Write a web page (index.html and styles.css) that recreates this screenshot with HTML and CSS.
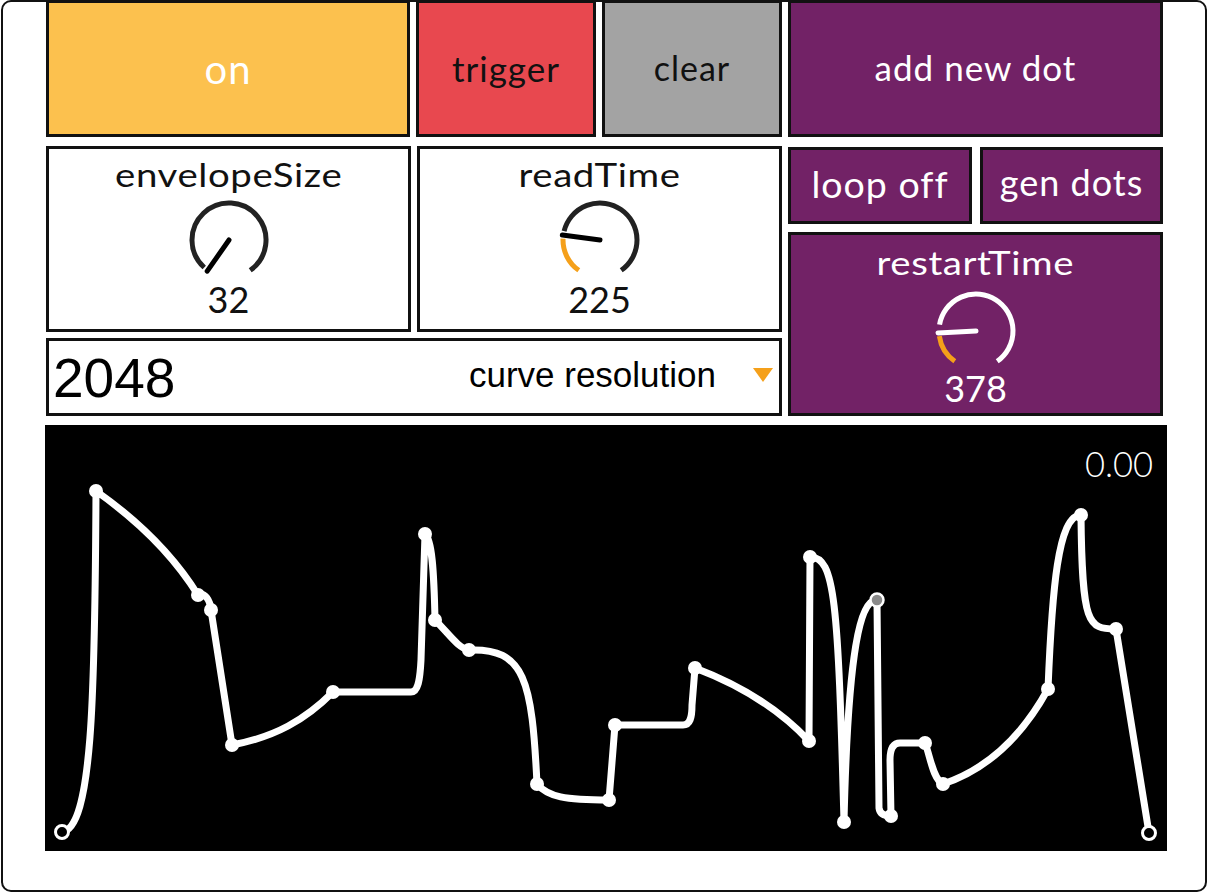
FILE: index.html
```html
<!DOCTYPE html>
<html>
<head>
<meta charset="utf-8">
<link rel="stylesheet" href="styles.css">
</head>
<body>
<div class="frame">
  <div class="top">
    <div class="leftcol">
      <div class="row r1">
        <div class="btn on">on</div>
        <div class="btn trigger">trigger</div>
        <div class="btn clear">clear</div>
      </div>
      <div class="row r2">
        <div class="dial">
          <div class="dial-label">envelopeSize</div>
          <svg class="knob" viewBox="0 0 84 84">
            <path class="arc-val" d="M20.78,72.31 A37,37 0 0 1 19.73,71.55"/>
            <path class="arc-dark" d="M17.24,69.50 A37,37 0 1 1 63.22,72.31"/>
            <line class="ptr-dark" x1="42" y1="42" x2="20.2" y2="73.13"/>
          </svg>
          <div class="dial-value">32</div>
        </div>
        <div class="dial">
          <div class="dial-label">readTime</div>
          <svg class="knob" viewBox="0 0 84 84">
            <path class="arc-val" d="M20.78,72.31 A37,37 0 0 1 5.02,40.71"/>
            <path class="arc-dark" d="M6.10,33.05 A37,37 0 1 1 63.22,72.31"/>
            <line class="ptr-dark" x1="42" y1="42" x2="4.33" y2="37.04"/>
          </svg>
          <div class="dial-value">225</div>
        </div>
      </div>
      <div class="select">
        <span class="sel-value">2048</span>
        <span class="sel-label">curve resolution</span>
        <span class="sel-caret"></span>
      </div>
    </div>
    <div class="rightcol">
      <div class="btn purple add">add new dot</div>
      <div class="row r2b">
        <div class="btn purple loop">loop off</div>
        <div class="btn purple gen">gen dots</div>
      </div>
      <div class="dial dial-purple">
        <div class="dial-label">restartTime</div>
        <svg class="knob" viewBox="0 0 84 84">
          <path class="arc-val" d="M20.78,72.31 A37,37 0 0 1 5.36,47.15"/>
          <path class="arc-light" d="M5.56,35.58 A37,37 0 1 1 63.22,72.31"/>
          <line class="ptr-light" x1="42" y1="42" x2="4.05" y2="43.99"/>
        </svg>
        <div class="dial-value">378</div>
      </div>
    </div>
  </div>
  <div class="canvas">
    <svg class="curve" viewBox="45 425 1122 426" width="1122" height="426">
      <path class="line" d="M62,832 C92,828 95,700 96,491 C130,515 170,550 198,595 C205,592 210,600 211,610 L232,745 C275,737 305,720 333,692 L411,692 C418,692 420,680 421,660 L425,534 C432,540 434,570 435,620 C450,635 458,648 469,650 C525,648 532,680 537,784 C548,797 565,800 609,800 L615,725 L683,725 C690,725 692,718 692,705 L695,668 C740,685 780,710 809,741 L810,557 C835,557 838,600 844,822 C848,650 860,600 877,600 L879,808 Q880,816 891,816 L890,760 Q890,743 900,743 L925,743 C930,755 933,780 943,784 C985,770 1020,740 1048,689 C1052,590 1058,515 1081,515 C1082,625 1088,629 1116,629 L1149,833"/>
      <g class="dots">
        <circle cx="96" cy="491" r="7"/>
        <circle cx="198" cy="595" r="7"/>
        <circle cx="211" cy="610" r="7"/>
        <circle cx="232" cy="745" r="7"/>
        <circle cx="333" cy="692" r="7"/>
        <circle cx="425" cy="534" r="7"/>
        <circle cx="435" cy="620" r="7"/>
        <circle cx="469" cy="650" r="7"/>
        <circle cx="537" cy="784" r="7"/>
        <circle cx="609" cy="800" r="7"/>
        <circle cx="615" cy="725" r="7"/>
        <circle cx="695" cy="668" r="7"/>
        <circle cx="809" cy="741" r="7"/>
        <circle cx="810" cy="557" r="7"/>
        <circle cx="844" cy="822" r="7"/>
        <circle cx="891" cy="816" r="7"/>
        <circle cx="925" cy="743" r="7"/>
        <circle cx="943" cy="784" r="7"/>
        <circle cx="1048" cy="689" r="7"/>
        <circle cx="1081" cy="515" r="7"/>
        <circle cx="1116" cy="629" r="7"/>
      </g>
      <circle class="sel-dot" cx="877" cy="600" r="6.5"/>
      <circle class="end-dot" cx="62" cy="832" r="6.5"/>
      <circle class="end-dot" cx="1149" cy="833" r="6.5"/>
    </svg>
    <span class="readout">0.00</span>
  </div>
</div>
</body>
</html>
```

FILE: styles.css
```css
body {
  margin: 0;
  background: #fff;
  font-family: Lato, "Noto Sans", sans-serif;
  color: #111;
}

.frame {
  box-sizing: border-box;
  width: 1206px;
  height: 892px;
  margin-left: 1px;
  border: 2px solid #111;
  border-radius: 10px;
  padding: 0 38px 0 43px;
}

.top {
  display: flex;
  gap: 6px;
  margin-top: -2px;
}

.leftcol {
  width: 736px;
  display: flex;
  flex-direction: column;
}

.rightcol {
  width: 375px;
  display: flex;
  flex-direction: column;
}

.row {
  display: flex;
}

.r1 {
  gap: 6px;
  height: 137px;
}

.btn {
  box-sizing: border-box;
  border: 3px solid #111;
  display: flex;
  align-items: center;
  justify-content: center;
  font-size: 35px;
  letter-spacing: 1px;
  padding-bottom: 2px;
}

.on {
  width: 364px;
  background: #fcc14e;
  color: #fff;
  font-size: 40px;
  padding-bottom: 0;
}

.trigger {
  width: 180px;
  background: #e8484f;
}

.clear {
  width: 180px;
  background: #a3a3a3;
  font-size: 34px;
}

.purple {
  background: #722266;
  color: #fff;
}

.add {
  height: 137px;
  padding-bottom: 4px;
}

.r2b {
  gap: 8px;
  height: 77px;
  margin-top: 10px;
}

.loop {
  width: 184px;
  font-size: 37.5px;
  padding-bottom: 4px;
}

.gen {
  width: 183px;
  font-size: 36px;
  padding-bottom: 8px;
}

.r2 {
  gap: 6px;
  height: 186px;
  margin-top: 9px;
}

.dial {
  box-sizing: border-box;
  border: 3px solid #111;
  width: 365px;
  display: flex;
  flex-direction: column;
  align-items: center;
  padding-top: 11px;
  background: #fff;
}

.dial-purple {
  width: 375px;
  height: 184px;
  margin-top: 8px;
  background: #722266;
  color: #fff;
  padding-top: 13px;
}

.dial-label {
  font-size: 32px;
  line-height: 30px;
  letter-spacing: 0.5px;
  transform: scaleX(1.2);
}

.knob {
  display: block;
  width: 84px;
  height: 84px;
  margin-top: 8px;
}

.dial-purple .knob {
  margin-top: 11px;
}

.dial-value {
  font-size: 36px;
  line-height: 34px;
}

.dial-purple .dial-value {
  margin-top: -2px;
}

.arc-val,
.arc-dark,
.arc-light {
  fill: none;
  stroke-width: 5;
}

.arc-val {
  stroke: #f5a01a;
}

.arc-dark {
  stroke: #222;
}

.arc-light {
  stroke: #fff;
}

.ptr-dark,
.ptr-light {
  stroke-width: 5;
  stroke-linecap: round;
}

.ptr-dark {
  stroke: #000;
}

.ptr-light {
  stroke: #fff;
}

.select {
  box-sizing: border-box;
  margin-top: 6px;
  height: 78px;
  border: 3px solid #111;
  display: flex;
  align-items: center;
  padding: 0 6px 0 4px;
  background: #fff;
  font-family: "Liberation Sans", Arial, sans-serif;
}

.sel-value {
  font-size: 55px;
  line-height: 60px;
  flex: 1;
  color: #000;
  padding-top: 2px;
}

.sel-label {
  font-size: 35px;
  margin-right: 37px;
  padding-bottom: 4px;
  color: #000;
}

.sel-caret {
  width: 0;
  height: 0;
  border-left: 10px solid transparent;
  border-right: 10px solid transparent;
  border-top: 14px solid #f5a01a;
  margin-bottom: 4px;
}

.canvas {
  position: relative;
  margin-top: 9px;
  margin-left: -1px;
  width: 1122px;
  height: 426px;
  background: #000;
}

.curve {
  display: block;
}

.line {
  fill: none;
  stroke: #fff;
  stroke-width: 7;
  stroke-linejoin: round;
  stroke-linecap: round;
}

.dots circle {
  fill: #fff;
}

.sel-dot {
  fill: #8a8a8a;
  stroke: #fff;
  stroke-width: 2.5;
}

.end-dot {
  fill: #000;
  stroke: #fff;
  stroke-width: 3;
}

.readout {
  position: absolute;
  top: 19px;
  right: 14px;
  color: #fff;
  font-size: 34.5px;
  font-weight: 300;
  line-height: 40px;
}
```
